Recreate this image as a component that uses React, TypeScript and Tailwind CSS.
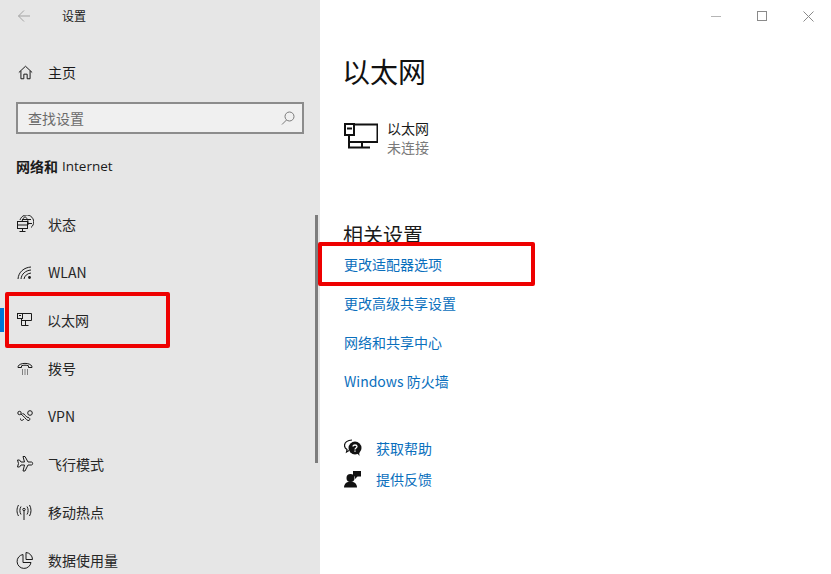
import React from "react";

const font = { fontFamily: '"Noto Sans CJK SC", "Open Sans", sans-serif' };

const S = (p: { children: React.ReactNode; w?: number; sw?: number; className?: string }) => (
  <svg width={p.w ?? 18} height={p.w ?? 18} viewBox="0 0 18 18" fill="none" stroke="#1a1a1a" strokeWidth={p.sw ?? 1} className={p.className}>
    {p.children}
  </svg>
);

const EthernetIcon = () => (
  <S>
    <path d="M5 2.500H15.500V9.500H5.500M5.500 7.500V14.500M9.500 9.500V14.500M5.500 14.500H12.500" />
    <rect x="1.500" y="2.500" width="5" height="5" fill="#e6e6e6" />
    <path d="M3 4.500H5" />
  </S>
);

const items: { label: string; icon: React.ReactNode; active?: boolean }[] = [
  {
    label: "状态",
    icon: (
      <S>
        <path d="M4 5A7 7 0 1 1 15 12.500M9 1.500C6.500 4 6 6 6 7M9 1.500C12 4 12.500 7 12 10M6 4.500H15M12 8.500H16" />
        <rect x="1.500" y="6.500" width="10" height="7" fill="#e6e6e6" />
        <path d="M1.500 10H11.500M6.500 13.500V16M3.500 16.500H9.500" />
      </S>
    ),
  },
  {
    label: "WLAN",
    icon: (
      <S>
        <path d="M2 16C2.500 9 8 4.500 15 4M5 16C5.500 11 9.500 7.500 15 7M8 16C8.500 13 11 10.500 15 10" />
        <circle cx="13.500" cy="14.500" r="1.400" fill="#1a1a1a" stroke="none" />
      </S>
    ),
  },
  { label: "以太网", icon: <EthernetIcon />, active: true },
  {
    label: "拨号",
    icon: (
      <S>
        <path d="M2 8.500C1.500 3 16.500 3 16 8.500H12.500V6.800C10.500 6 7.500 6 5.500 6.800V8.500Z" />
        <path d="M6 11H7M8.500 11H9.500M11 11H12M6 13H7M8.500 13H9.500M11 13H12M6 15H7M8.500 15H9.500M11 15H12" />
      </S>
    ),
  },
  {
    label: "VPN",
    icon: (
      <S>
        <circle cx="3.500" cy="6" r="1.700" />
        <circle cx="14" cy="6" r="2.300" />
        <path d="M5 7C8 9 10 13 12 13.500C14.500 14 14.500 10.500 12 10.500C10 10.500 9 6.500 6.500 6.500" />
        <path d="M8 12C6.500 14 4 13.800 4.500 11.500" />
      </S>
    ),
  },
  {
    label: "飞行模式",
    icon: (
      <S>
        <path d="M7 1.500H9L12 7H15.500C17 7 17 10 15.500 10H12L9 16H7L8.500 10H5L3.500 12H1.500L2.500 8.500L1.500 5H3.500L5 7H8.500Z" />
      </S>
    ),
  },
  {
    label: "移动热点",
    icon: (
      <S>
        <path d="M8 8V17" />
        <circle cx="8" cy="6.500" r="1.200" />
        <path d="M5 3.500C3.500 6 3.500 9 5 11.500M11 3.500C12.500 6 12.500 9 11 11.500M2.500 2C0.500 5.500 0.500 9.500 2.500 13M13.500 2C15.500 5.500 15.500 9.500 13.500 13" />
      </S>
    ),
  },
  {
    label: "数据使用量",
    icon: (
      <S>
        <path d="M7 3.500A7 7 0 1 0 15 11.500H7Z" />
        <path d="M10 1.500A7 7 0 0 1 16.500 8.500H10Z" />
      </S>
    ),
  },
];

const links = ["更改适配器选项", "更改高级共享设置", "网络和共享中心", "Windows 防火墙"];

export default function App() {
  return (
    <div className="relative flex w-[831px] h-[574px] overflow-hidden bg-white text-[#1a1a1a]" style={font}>
      <aside className="relative w-[320px] shrink-0 bg-[#e6e6e6] overflow-hidden">
        <div className="h-[31px] flex items-center pl-[18px]">
          <svg width="12" height="12" viewBox="0 0 12 12" fill="none" stroke="#a3a3a3" strokeWidth="1">
            <path d="M0.500 6H12M6 0.500L0.500 6L6 11.500" />
          </svg>
          <span className="ml-[32px] text-[12px] leading-none">设置</span>
        </div>
        <div className="mt-[25px] h-[32px] flex items-center pl-[18px]">
          <S w={15}>
            <path d="M1 9L9 1.500L17 9M3.500 7V16.500H7V11H11V16.500H14.500V7" strokeWidth="1.200" />
          </S>
          <span className="ml-[15px] text-[14px] leading-none">主页</span>
        </div>
        <div className="ml-[16px] mt-[14px] w-[288px] h-[32px] border-2 border-[#8c8c8c] bg-[#f0f0f0] flex items-center justify-between pl-[10px] pr-[7px]">
          <span className="text-[14px] leading-none text-[#6b6b6b]">查找设置</span>
          <svg width="14" height="14" viewBox="0 0 14 14" fill="none" stroke="#7a7a7a" strokeWidth="1">
            <circle cx="8.500" cy="5.500" r="4.500" />
            <path d="M5.500 9L1 13.500" />
          </svg>
        </div>
        <div className="mt-[22px] ml-[16px] h-[20px] flex items-center text-[13.500px] leading-none">
          <span className="font-bold text-[14px]">网络和</span>
          <span className="ml-[4px] font-medium translate-y-px" style={{ fontFamily: '"Open Sans", sans-serif' }}>Internet</span>
        </div>
        <nav className="mt-[24px] flex flex-col">
          {items.map((it) => (
            <div key={it.label} className="relative h-[48px] flex items-center pl-[16px]">
              {it.active && <div className="absolute left-0 top-[12px] w-[4px] h-[24px] bg-[#0078d7]" />}
              <span className="w-[32px] flex">{it.icon}</span>
              <span className={"text-[14px] leading-none text-[#262626]" + (it.active ? " -ml-px" : "")}>{it.label}</span>
            </div>
          ))}
        </nav>
        <div className="absolute left-[315px] top-[215px] w-[3px] h-[248px] bg-[#7d7d7d]" />
      </aside>

      <main className="relative flex-1 pl-[24px]">
        <div className="absolute right-0 top-0 flex h-[32px] items-center text-[#8a8a8a]">
          <div className="w-[46px] flex justify-center"><div className="w-[10px] h-px bg-[#b5b5b5]" /></div>
          <div className="w-[46px] flex justify-center"><div className="w-[10px] h-[10px] border border-[#8a8a8a]" /></div>
          <div className="w-[46px] flex justify-center">
            <svg width="11" height="11" viewBox="0 0 11 11" stroke="#8a8a8a" strokeWidth="1"><path d="M0.500 0.500L10.500 10.500M10.500 0.500L0.500 10.500" /></svg>
          </div>
        </div>
        <h1 className="pt-[51px] -ml-[2px] text-[28px] leading-[40px] font-normal text-[#111]">以太网</h1>
        <div className="mt-[28px] flex items-start">
          <svg width="34" height="26" viewBox="0 0 34 26" fill="none" stroke="#111" strokeWidth="2" className="mt-[4px]">
            <path d="M9 1.500H33.500V19H5M5 12V25.500M18 19V24M4 24.500H26" />
            <rect x="1" y="1" width="9" height="11" fill="#fff" />
            <path d="M3 5.500H8" />
          </svg>
          <div className="ml-[9px] flex flex-col">
            <span className="text-[14px] leading-[19px]">以太网</span>
            <span className="text-[14px] leading-[19px] text-[#7a7a7a]">未连接</span>
          </div>
        </div>
        <h2 className="mt-[64px] -ml-px text-[20px] leading-[28px] font-normal text-[#1a1a1a]">相关设置</h2>
        <div className="-mt-[5px] flex flex-col">
          {links.map((l) => (
            <a key={l} className="h-[39px] flex items-center text-[14px] leading-none text-[#0a6fbd]">{l}</a>
          ))}
        </div>
        <div className="mt-[32px] flex flex-col">
          <div className="h-[31px] flex items-center">
            <svg width="18" height="18" viewBox="0 0 18 18" className="mr-[14px]">
              <path d="M8 1C3.500 1 0.500 3.500 0.500 6.500C0.500 8 1.500 9.500 3 10.500L2.500 13L5 11.500" fill="none" stroke="#111" strokeWidth="1.200" />
              <circle cx="11" cy="9" r="6.500" fill="#111" />
              <path d="M13 14L15.500 17L15 12Z" fill="#111" />
              <path d="M9 7.500C9 5.500 13 5.500 13 7.500C13 9 11 9 11 10.500M11 11.500V12.800" stroke="#fff" strokeWidth="1.300" fill="none" />
            </svg>
            <a className="text-[14px] leading-none text-[#0a6fbd]">获取帮助</a>
          </div>
          <div className="h-[31px] flex items-center">
            <svg width="18" height="18" viewBox="0 0 18 18" className="mr-[14px]" fill="#111">
              <circle cx="6.500" cy="8" r="4" />
              <path d="M0 17.500C0 9.500 13 9.500 13 17.500Z" />
              <path d="M9 1H17V6.500H13.500L11 9V6.500H9Z" />
            </svg>
            <a className="text-[14px] leading-none text-[#0a6fbd]">提供反馈</a>
          </div>
        </div>
      </main>

      <div className="absolute left-[5px] top-[292px] w-[165px] h-[56px] border-[4px] border-[#ee0000] rounded-[2px]" />
      <div className="absolute left-[318px] top-[242px] w-[217px] h-[44px] border-[4px] border-[#ee0000] rounded-[2px]" />
    </div>
  );
}
